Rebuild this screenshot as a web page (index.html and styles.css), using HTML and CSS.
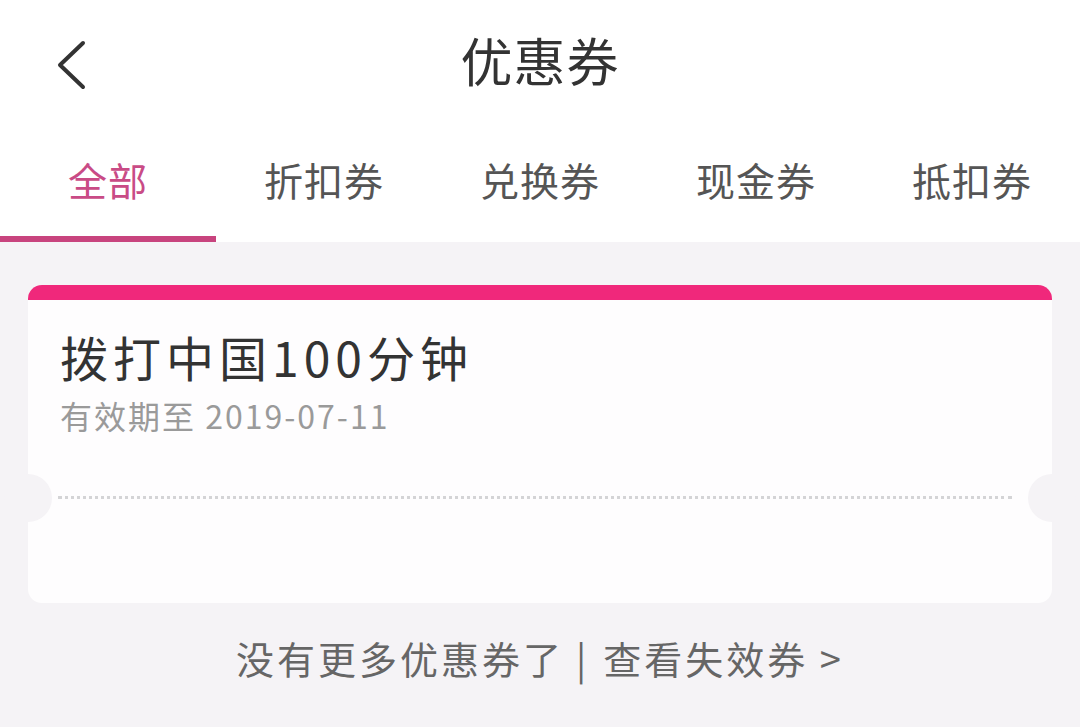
FILE: index.html
```html
<!DOCTYPE html>
<html lang="zh-CN">
<head>
<meta charset="utf-8">
<title>优惠券</title>
<link rel="stylesheet" href="styles.css">
</head>
<body>
<div class="page">
  <header class="topbar">
    <div class="navbar">
      <span class="back">
        <svg width="32" height="50" viewBox="0 0 32 50"><path d="M28 3 L5 25 L28 47" fill="none" stroke="#333" stroke-width="4" stroke-linecap="round" stroke-linejoin="round"/></svg>
      </span>
      <h1 class="title">优惠券</h1>
    </div>
    <nav class="tabs">
      <div class="tab active">全部</div>
      <div class="tab">折扣券</div>
      <div class="tab">兑换券</div>
      <div class="tab">现金券</div>
      <div class="tab">抵扣券</div>
    </nav>
  </header>
  <main class="content">
    <div class="coupon">
      <div class="coupon-top">
        <div class="coupon-name">拨打中国100分钟</div>
        <div class="coupon-date">有效期至 2019-07-11</div>
      </div>
      <div class="coupon-divider"></div>
      <div class="coupon-bottom"></div>
    </div>
    <div class="footer-note">没有更多优惠券了<span class="sep">|</span>查看失效券 &gt;</div>
  </main>
</div>
</body>
</html>
```
FILE: styles.css
```css
html, body {
  margin: 0;
  padding: 0;
}
body {
  width: 1080px;
  height: 727px;
  overflow: hidden;
  background: #f5f3f6;
  font-family: "Noto Sans CJK SC", "Noto Sans", sans-serif;
}
.page {
  display: flex;
  flex-direction: column;
}
.topbar {
  background: #ffffff;
}
.navbar {
  position: relative;
  height: 128px;
  display: flex;
  align-items: center;
  justify-content: center;
}
.back {
  position: absolute;
  left: 55px;
  top: 40px;
  width: 32px;
  height: 50px;
}
.back svg { display: block; }
.title {
  margin: 0;
  font-size: 52px;
  font-weight: 400;
  color: #333333;
  line-height: 1;
  margin-top: -8px;
  letter-spacing: 1px;
}
.tabs {
  display: flex;
  height: 114px;
}
.tab {
  flex: 1;
  display: flex;
  align-items: center;
  justify-content: center;
  font-size: 39px;
  letter-spacing: 1px;
  color: #555555;
  padding-bottom: 6px;
  box-sizing: border-box;
  border-bottom: 6px solid transparent;
}
.tab.active {
  color: #c94b86;
  border-bottom-color: #c8447e;
}
.content {
  padding: 43px 28px 0;
  display: flex;
  flex-direction: column;
}
.coupon {
  position: relative;
  background: #fefdfe;
  border-radius: 14px;
  border-top: 15px solid #f0287b;
  height: 318px;
  box-sizing: border-box;
  display: flex;
  flex-direction: column;
}
.coupon-top {
  padding: 25px 32px 0;
  height: 196px;
  box-sizing: border-box;
}
.coupon-name {
  font-size: 48px;
  color: #333333;
  line-height: 62px;
  letter-spacing: 5px;
}
.coupon-date {
  font-size: 32px;
  color: #9a9a9a;
  line-height: 40px;
  margin-top: 8px;
  letter-spacing: 2px;
}
.coupon-divider {
  position: relative;
  margin: 0 40px 0 30px;
  border-top: 3px dotted #d4d4d6;
}
.coupon-divider::before,
.coupon-divider::after {
  content: "";
  position: absolute;
  top: -25px;
  width: 48px;
  height: 48px;
  border-radius: 50%;
  background: #f5f3f6;
}
.coupon-divider::before { left: -54px; }
.coupon-divider::after { right: -64px; }
.coupon-bottom {
  flex: 1;
}
.footer-note {
  margin-top: 30px;
  text-align: center;
  font-size: 38px;
  color: #666666;
  line-height: 50px;
  letter-spacing: 3px;
}
.sep {
  margin: 0 14px 0 12px;
}
```
